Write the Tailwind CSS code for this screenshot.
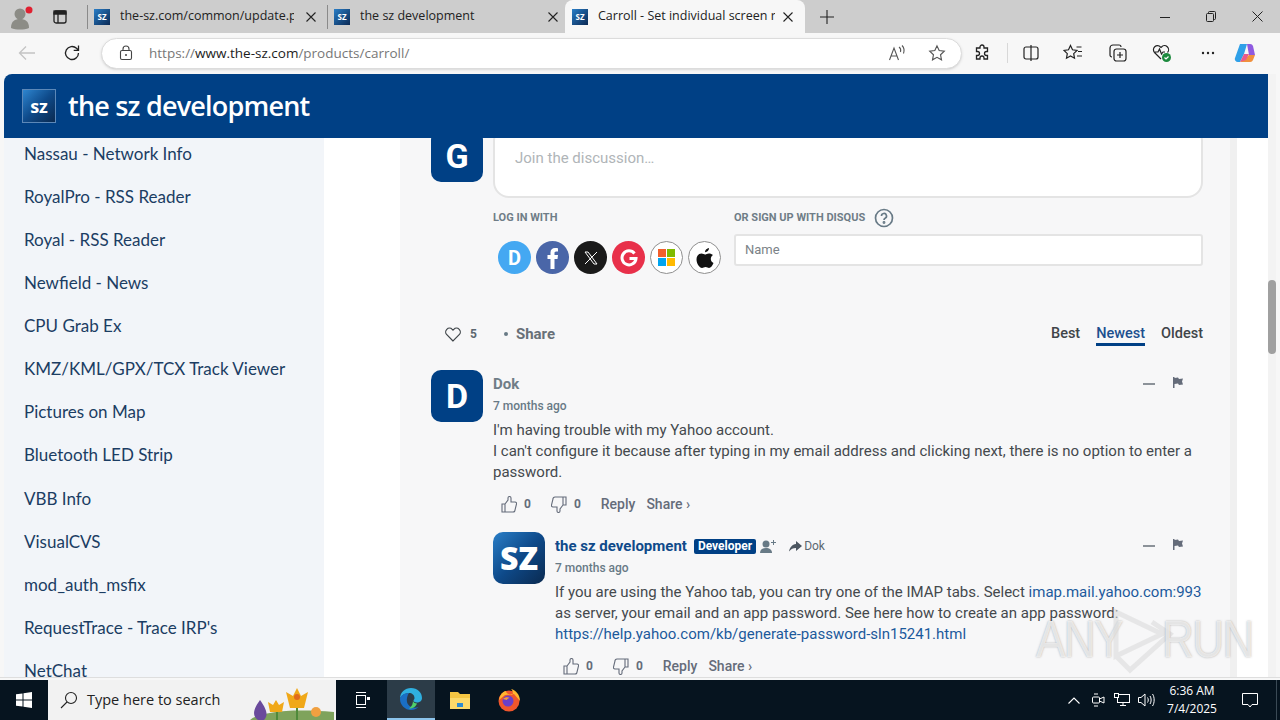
<!DOCTYPE html>
<html lang="en">
<head>
  <meta charset="UTF-8" />
  <title>Carroll - Set individual screen resolution</title>
  <script src="https://cdn.jsdelivr.net/npm/@tailwindcss/browser@4"></script>
</head>
<body class="w-[1280px] h-[720px] overflow-hidden bg-[#f7f7f7] font-['Roboto',sans-serif]">
<div class="flex flex-col h-[720px]">

  <!-- tab bar -->
  <div class="h-[33px] bg-[#cdcdcd] flex items-center text-[12.5px] text-[#222] font-['Open_Sans',sans-serif]">
    <div class="w-[44px] flex justify-center">
      <svg width="24" height="26" viewBox="0 0 24 26"><circle cx="10" cy="10" r="5.5" fill="#8c8c86"/><path d="M1 24c0-7 4-9 9-9s9 2 9 9c-5 2-13 2-18 0z" fill="#8c8c86"/><circle cx="19" cy="6" r="3.5" fill="#e02030"/></svg>
    </div>
    <div class="w-[32px] flex justify-center">
      <svg width="16" height="16" viewBox="0 0 16 16" fill="none" stroke="#222" stroke-width="1.3"><rect x="2" y="2" width="12" height="12" rx="2"/><path d="M2 4.5h12M6 4.5V14" /><rect x="2" y="2" width="12" height="3" fill="#222"/></svg>
    </div>
    <div class="w-[11px]"></div>
    <div class="w-px h-[24px] bg-[#8a8a8a]"></div>
    <div class="w-[239px] h-full flex items-center pl-[6px]">
      <div class="w-[16px] h-[16px] bg-gradient-to-br from-[#2a7fc8] to-[#0b2a55] text-white text-[8px] font-bold flex items-center justify-center">SZ</div>
      <span class="ml-[10px] w-[174px] overflow-hidden whitespace-nowrap">the-sz.com/common/update.php</span>
      <svg class="ml-[12px]" width="10" height="10" viewBox="0 0 10 10" stroke="#222" stroke-width="1.1"><path d="M0.5 0.5l9 9M9.5 0.5l-9 9"/></svg>
    </div>
    <div class="w-px h-[24px] bg-[#8a8a8a]"></div>
    <div class="w-[237px] h-full flex items-center pl-[6px]">
      <div class="w-[16px] h-[16px] bg-gradient-to-br from-[#2a7fc8] to-[#0b2a55] text-white text-[8px] font-bold flex items-center justify-center">SZ</div>
      <span class="ml-[10px] w-[188px] overflow-hidden whitespace-nowrap">the sz development</span>
      <svg class="ml-[0px]" width="10" height="10" viewBox="0 0 10 10" stroke="#222" stroke-width="1.1"><path d="M0.5 0.5l9 9M9.5 0.5l-9 9"/></svg>
    </div>
    <div class="w-[240px] h-[33px] mt-[0px] bg-[#f7f7f7] rounded-t-[8px] flex items-center pl-[7px]">
      <div class="w-[16px] h-[16px] bg-gradient-to-br from-[#2a7fc8] to-[#0b2a55] text-white text-[8px] font-bold flex items-center justify-center">SZ</div>
      <span class="ml-[10px] w-[177px] overflow-hidden whitespace-nowrap">Carroll - Set individual screen resolution</span>
      <svg class="ml-[8px]" width="10" height="10" viewBox="0 0 10 10" stroke="#222" stroke-width="1.1"><path d="M0.5 0.5l9 9M9.5 0.5l-9 9"/></svg>
    </div>
    <div class="ml-[15px]">
      <svg width="14" height="14" viewBox="0 0 14 14" stroke="#222" stroke-width="1.1"><path d="M7 0v14M0 7h14"/></svg>
    </div>
    <div class="flex-1"></div>
    <div class="flex items-center">
      <div class="w-[46px] flex justify-center"><svg width="10" height="10" viewBox="0 0 10 10" stroke="#222"><path d="M0 5.5h10"/></svg></div>
      <div class="w-[46px] flex justify-center"><svg width="10" height="11" viewBox="0 0 10 11" fill="none" stroke="#222"><rect x="0.5" y="2.5" width="7" height="8" rx="1"/><path d="M2.5 2.5v-1a1 1 0 0 1 1-1h5a1 1 0 0 1 1 1v6a1 1 0 0 1-1 1h-1"/></svg></div>
      <div class="w-[46px] flex justify-center"><svg width="11" height="11" viewBox="0 0 11 11" stroke="#222"><path d="M0.5 0.5l10 10M10.5 0.5l-10 10"/></svg></div>
    </div>
  </div>

  <!-- toolbar -->
  <div class="h-[41px] bg-[#f7f7f7] flex items-center pb-[1px] font-['Open_Sans',sans-serif]">
    <div class="w-[54px] flex justify-center">
      <svg width="18" height="16" viewBox="0 0 18 16" fill="none" stroke="#c4c4c4" stroke-width="1.3"><path d="M17 8H1.5M8 1.5L1.5 8 8 14.500"/></svg>
    </div>
    <div class="w-[36px] flex justify-center">
      <svg width="18" height="18" viewBox="0 0 18 18" fill="none" stroke="#222" stroke-width="1.3"><path d="M15.500 9a6.500 6.500 0 1 1-2-4.700L15.500 6.300M15.500 1.500v4.800h-4.800"/></svg>
    </div>
    <div class="w-[11px]"></div>
    <div class="w-[861px] h-[31px] bg-white rounded-full border border-[#dcdcdc] shadow-sm flex items-center">
      <svg class="ml-[17px]" width="14" height="16" viewBox="0 0 14 16" fill="none" stroke="#444" stroke-width="1.1"><rect x="1.500" y="5.500" width="11" height="9" rx="1.500"/><path d="M4 5.500V4a3 3 0 0 1 6 0v1.500"/><circle cx="7" cy="10" r="1" fill="#444" stroke="none"/></svg>
      <span class="ml-[16px] text-[13.500px] text-[#777] whitespace-nowrap">https://<span class="text-[#1c1c1c]">www.the-sz.com</span>/products/carroll/</span>
      <div class="flex-1"></div>
      <svg width="18" height="16" viewBox="0 0 18 16" fill="none" stroke="#555" stroke-width="1.1"><path d="M1.500 15L6 3l4.500 12M3 11h6M11 2c1.500 1 2 3 1.500 5M14 0.500c2 2 2.500 5 1.500 8"/></svg>
      <svg class="ml-[22px] mr-[15px]" width="18" height="18" viewBox="0 0 24 24" fill="none" stroke="#555" stroke-width="1.500"><path d="M12 2.500l2.900 6.300 6.800.8-5 4.700 1.300 6.800-6-3.400-6 3.400 1.300-6.800-5-4.700 6.800-.8z"/></svg>
    </div>
    <div class="w-[29px] flex justify-end">
      <svg width="18" height="18" viewBox="0 0 18 18" fill="none" stroke="#222" stroke-width="1.3"><path d="M7 3a2 2 0 0 1 4 0v1h3.500v3.500h-1a2 2 0 0 0 0 4h1V15H11v-1a2 2 0 0 0-4 0v1H3.500v-3.500h1a2 2 0 0 0 0-4h-1V4H7z"/></svg>
    </div>
    <div class="w-px h-[20px] bg-[#d8d8d8] ml-[16px]"></div>
    <div class="w-[31px] flex justify-end">
      <svg width="16" height="16" viewBox="0 0 16 16" fill="none" stroke="#222" stroke-width="1.200"><rect x="1" y="2" width="14" height="12" rx="2"/><path d="M8 0v16" stroke="#222"/></svg>
    </div>
    <div class="w-[44px] flex justify-end">
      <svg width="20" height="18" viewBox="0 0 20 18" fill="none" stroke="#222" stroke-width="1.200"><path d="M7.500 1.500l2 4.300 4.500.6-3.300 3.200.8 4.600-4-2.300-4 2.300.8-4.600L1 6.400l4.500-.6zM13.500 3h5M15 7.500h4M14 12h5"/></svg>
    </div>
    <div class="w-[44px] flex justify-end">
      <svg width="18" height="18" viewBox="0 0 18 18" fill="none" stroke="#222" stroke-width="1.200"><rect x="5" y="5" width="12" height="12" rx="2.500"/><path d="M3 13a2 2 0 0 1-2-2V4a3 3 0 0 1 3-3h6a2 2 0 0 1 2 2M11 8v6M8 11h6"/></svg>
    </div>
    <div class="w-[45px] flex justify-end">
      <svg width="20" height="20" viewBox="0 0 20 20" fill="none" stroke="#222" stroke-width="1.200"><path d="M9 16L2.500 9.500a4 4 0 0 1 6-5.500l.5.5.5-.5a4 4 0 0 1 6 5.500M3 9h3l1.500-3 2 5 1.500-2h2"/><circle cx="14.500" cy="14.500" r="4.500" fill="#1d8a3e" stroke="none"/><path d="M12.500 14.500l1.500 1.500 2.500-2.500" stroke="#fff"/></svg>
    </div>
    <div class="w-[43px] flex justify-end">
      <svg width="14" height="4" viewBox="0 0 14 4" fill="#222"><circle cx="2" cy="2" r="1.200"/><circle cx="7" cy="2" r="1.200"/><circle cx="12" cy="2" r="1.200"/></svg>
    </div>
    <div class="w-[41px] flex justify-end">
      <svg width="22" height="22" viewBox="0 0 22 22"><path d="M6 2h7l-3 10-4 8H4a3 3 0 0 1-3-4z" fill="#2fa0e8"/><path d="M13 2h3a3 3 0 0 1 3 2l2 9h-6z" fill="#8f5ae0"/><path d="M15 13h6l-2 5a3 3 0 0 1-3 2H6l5-3z" fill="#f0903c"/><path d="M6 20l4-8h5l-3 6z" fill="#e85a8c"/></svg>
    </div>
  </div>

  <!-- page viewport -->
  <div class="h-[603px] flex pl-[4px] pr-[4px]">
    <div class="w-[1264px] flex flex-col overflow-hidden rounded-tl-[8px] bg-white">
      <div class="relative z-10 h-[64px] shrink-0 bg-[#004085] flex items-center pl-[18px]">
        <div class="w-[34px] h-[34px] border border-[#5c88b8] bg-gradient-to-br from-[#2e86d0] via-[#0e4a8a] to-[#0a2a50] flex items-center justify-center text-white text-[18px] font-bold font-['Open_Sans',sans-serif]">sz</div>
        <span class="ml-[12px] text-white text-[27px] font-semibold tracking-[-0.8px] font-['Open_Sans',sans-serif] whitespace-nowrap">the sz development</span>
      </div>
      <div class="flex flex-1 min-h-0">
        <!-- sidebar -->
        <div class="w-[320px] shrink-0 bg-[#f2f5f9] overflow-hidden text-[17px] text-[#1b3d63] font-['Lato',sans-serif] whitespace-nowrap">
          <div class="-mt-[6px]"></div>
          <div class="h-[43.100px] flex items-center pl-[20px]">Nassau - Network Info</div>
          <div class="h-[43.100px] flex items-center pl-[20px]">RoyalPro - RSS Reader</div>
          <div class="h-[43.100px] flex items-center pl-[20px]">Royal - RSS Reader</div>
          <div class="h-[43.100px] flex items-center pl-[20px]">Newfield - News</div>
          <div class="h-[43.100px] flex items-center pl-[20px]">CPU Grab Ex</div>
          <div class="h-[43.100px] flex items-center pl-[20px]">KMZ/KML/GPX/TCX Track Viewer</div>
          <div class="h-[43.100px] flex items-center pl-[20px]">Pictures on Map</div>
          <div class="h-[43.100px] flex items-center pl-[20px]">Bluetooth LED Strip</div>
          <div class="h-[43.100px] flex items-center pl-[20px]">VBB Info</div>
          <div class="h-[43.100px] flex items-center pl-[20px]">VisualCVS</div>
          <div class="h-[43.100px] flex items-center pl-[20px]">mod_auth_msfix</div>
          <div class="h-[43.100px] flex items-center pl-[20px]">RequestTrace - Trace IRP's</div>
          <div class="h-[43.100px] flex items-center pl-[20px]">NetChat</div>
        </div>
        <div class="w-[76px] shrink-0"></div>
        <!-- disqus panel -->
        <div class="w-[837px] shrink-0 bg-[#f7f7f8] border-r-[7px] border-[#f0f0f0] overflow-hidden pl-[31px] pr-[27px] text-[#3f4549]">
          <div class="-mt-[8px] flex gap-[10px] h-[68px]">
            <div class="w-[52px] h-[52px] shrink-0 bg-[#004085] rounded-[10px] flex items-center justify-center text-white text-[34px] font-bold">G</div>
            <div class="w-[710px] h-[73px] -mt-[5px] bg-white rounded-[16px] border-2 border-[#e4e4e4] pl-[20px] pt-[20px] text-[15px] text-[#b0b5b8]">Join the discussion…</div>
          </div>
          <div class="ml-[62px] flex">
            <div class="w-[241px]">
              <div class="mt-[12px] h-[16px] leading-[16px] text-[11px] font-bold text-[#6f7d87]">LOG IN WITH</div>
              <div class="mt-[15px] ml-[5px] flex gap-[5px]">
                <div class="w-[33px] h-[33px] rounded-full bg-[#44a8f2] flex items-center justify-center text-white text-[20px] font-bold">D</div>
                <div class="w-[33px] h-[33px] rounded-full bg-[#4a66a8] flex items-center justify-center">
                  <svg width="12" height="22" viewBox="0 0 12 22" fill="#fff"><path d="M3.500 22V12H0.500V8H3.500V5.500C3.500 2.500 5.300 1 8 1c1.300 0 2.500.1 3 .2v3.300H9.200C7.800 4.500 7.500 5.200 7.500 6.300V8H11l-.5 4h-3v10z"/></svg>
                </div>
                <div class="w-[33px] h-[33px] rounded-full bg-[#1a1a1a] flex items-center justify-center">
                  <svg width="14" height="14" viewBox="0 0 14 14" fill="none" stroke="#fff" stroke-width="1"><path d="M1 1h3l9 12h-3zM13 1L1 13"/></svg>
                </div>
                <div class="w-[33px] h-[33px] rounded-full bg-[#e8304a] flex items-center justify-center">
                  <svg width="18" height="18" viewBox="0 0 18 18" fill="none" stroke="#fff" stroke-width="3"><path d="M14.500 4.500A7 7 0 1 0 16 9.500H9.500"/></svg>
                </div>
                <div class="w-[33px] h-[33px] rounded-full bg-white border border-[#8f8f8f] flex items-center justify-center">
                  <div class="grid grid-cols-2 gap-[1px] w-[17px] h-[17px]">
                    <div class="bg-[#f25f2c]"></div><div class="bg-[#7fba00]"></div><div class="bg-[#00a4ef]"></div><div class="bg-[#ffb900]"></div>
                  </div>
                </div>
                <div class="w-[33px] h-[33px] rounded-full bg-white border border-[#8f8f8f] flex items-center justify-center">
                  <svg width="18" height="20" viewBox="0 0 18 20" fill="#111"><path d="M13 0c.2 2-1.800 4.300-4 4.200C8.800 2.200 11 .2 13 0zM17 7c-1.400 1-2.200 2.200-2.200 3.900 0 2 1.200 3.300 2.700 4-.9 2.400-2.700 5-4.500 5-1.100 0-1.800-.8-3.400-.8s-2.400.8-3.500.8C3.500 20 .5 15.500.5 11.500c0-4 2.600-6 5-6 1.500 0 2.700 1 3.500 1 .8 0 2.200-1.100 3.900-1.100 1.500 0 3.100.7 4.100 1.600z"/></svg>
                </div>
              </div>
            </div>
            <div class="flex-1">
              <div class="mt-[8px] flex items-center h-[24px]">
                <span class="text-[11px] font-bold text-[#6f7d87]">OR SIGN UP WITH DISQUS</span>
                <svg class="ml-[9px]" width="20" height="20" viewBox="0 0 20 20" fill="none" stroke="#687a86" stroke-width="1.700"><circle cx="10" cy="10" r="8.500"/><path d="M7.500 8a2.500 2.500 0 1 1 3.600 2.200c-.8.400-1.100.9-1.100 1.800"/><circle cx="10" cy="14.500" r=".6"/></svg>
              </div>
              <div class="mt-[4px] w-[469px] h-[32px] bg-white border-2 border-[#e4e4e4] rounded-[3px] pl-[9px] flex items-center text-[13px] text-[#7b8287]">Name</div>
            </div>
          </div>

          <!-- sort row -->
          <div class="mt-[50px] flex justify-between items-start h-[22px]">
            <div class="flex items-center h-[20px] ml-[14px]">
              <svg width="16" height="15" viewBox="0 0 16 15" fill="none" stroke="#3f4549" stroke-width="1.200"><path d="M8 14L1.800 7.700a3.800 3.800 0 0 1 5.400-5.400l.8.800.8-.8a3.800 3.800 0 0 1 5.400 5.400z"/></svg>
              <span class="ml-[9px] text-[12px] font-bold text-[#5c6770]">5</span>
              <span class="ml-[27px] w-[4px] h-[4px] rounded-full bg-[#687a86]"></span>
              <span class="ml-[8px] text-[15px] font-bold text-[#687077]">Share</span>
            </div>
            <div class="flex text-[14.500px] font-medium">
              <span class="h-[22px] leading-[20px]">Best</span>
              <span class="ml-[16px] h-[22px] leading-[20px] text-[#1c4f8f] border-b-[3px] border-[#004085]">Newest</span>
              <span class="ml-[16px] h-[22px] leading-[20px]">Oldest</span>
            </div>
          </div>

          <!-- comment -->
          <div class="mt-[24px] flex gap-[10px]">
            <div class="w-[52px] h-[52px] shrink-0 bg-[#004085] rounded-[10px] flex items-center justify-center text-white text-[34px] font-bold">D</div>
            <div class="flex-1">
              <div class="pt-[3px] h-[25px] flex justify-between pr-[20px]">
                <span class="text-[15px] font-bold text-[#6f7d87] leading-[22px]">Dok</span>
                <div class="flex items-center gap-[18px]">
                  <span class="w-[12px] h-[2px] bg-[#8c9299]"></span>
                  <svg class="-mt-[4px]" width="10" height="11" viewBox="0 0 10 11" fill="#656c7a"><path d="M0 0h1.500v11H0zM1.500 1L5 .5 6 2l4-.5-1 3 1 3-4 .5-1-1.500-3.500.5z"/></svg>
                </div>
              </div>
              <div class="h-[22px] leading-[22px] text-[12px] font-medium text-[#687a86]">7 months ago</div>
              <div class="mt-[3px] text-[15px] leading-[21px] text-[#44494d] w-[710px]">I'm having trouble with my Yahoo account.<br>I can't configure it because after typing in my email address and clicking next, there is no option to enter a password.</div>
              <div class="mt-[10px] ml-[8px] h-[22px] flex items-center text-[#656c7a]">
                <svg width="16" height="17" viewBox="0 0 16 17" fill="none" stroke="#656c7a" stroke-width="1.100"><path d="M1 8h3v8H1zM4 8l3-4V2a1.500 1.500 0 0 1 3 0v4h4a1.500 1.500 0 0 1 1.500 2l-1.500 6a2 2 0 0 1-2 2H4"/></svg>
                <span class="ml-[7px] text-[12px] font-bold">0</span>
                <svg class="ml-[20px]" width="16" height="17" viewBox="0 0 16 17" fill="none" stroke="#656c7a" stroke-width="1.100"><path d="M15 9h-3V1h3zM12 9l-3 4v2a1.500 1.500 0 0 1-3 0v-4H2a1.500 1.500 0 0 1-1.500-2L2 3a2 2 0 0 1 2-2h8"/></svg>
                <span class="ml-[7px] text-[12px] font-bold">0</span>
                <span class="ml-[20px] text-[14px] font-medium">Reply</span>
                <span class="ml-[11px] text-[14px] font-medium">Share ›</span>
              </div>

              <!-- reply -->
              <div class="mt-[17px] flex gap-[10px]">
                <div class="w-[52px] h-[52px] shrink-0 rounded-[10px] bg-gradient-to-br from-[#2a7fc8] via-[#0e4a8a] to-[#0a2a50] flex items-center justify-center text-white text-[32px] font-extrabold font-['Open_Sans',sans-serif]">SZ</div>
                <div class="flex-1">
                  <div class="pt-[3px] h-[25px] flex justify-between pr-[20px]">
                    <div class="flex items-center">
                      <span class="text-[15px] font-bold text-[#0f4a8a] leading-[22px]">the sz development</span>
                      <span class="ml-[7px] h-[15px] px-[4px] rounded-[2px] bg-[#004085] text-white text-[12px] font-bold leading-[15px]">Developer</span>
                      <svg class="ml-[4px]" width="17" height="15" viewBox="0 0 17 15" fill="#687a86"><circle cx="6" cy="5" r="3.500"/><path d="M0 14c0-3.500 2.500-5 6-5s6 1.500 6 5z"/><path d="M11 3.500h5M13.500 1v5" stroke="#687a86" fill="none"/></svg>
                      <svg class="ml-[12px]" width="13" height="11" viewBox="0 0 13 11" fill="#4c5660"><path d="M7 0l6 5-6 5V7C4 7 2 8 0 10.500 .8 6.500 3 3.500 7 3z"/></svg>
                      <span class="ml-[2px] text-[12px] text-[#5c6770]">Dok</span>
                    </div>
                    <div class="flex items-center gap-[18px]">
                      <span class="w-[12px] h-[2px] bg-[#8c9299]"></span>
                      <svg class="-mt-[4px]" width="10" height="11" viewBox="0 0 10 11" fill="#656c7a"><path d="M0 0h1.500v11H0zM1.500 1L5 .5 6 2l4-.5-1 3 1 3-4 .5-1-1.500-3.500.5z"/></svg>
                    </div>
                  </div>
                  <div class="h-[22px] leading-[22px] text-[12px] font-medium text-[#687a86]">7 months ago</div>
                  <div class="mt-[3px] text-[15px] leading-[21px] text-[#44494d] w-[648px]">If you are using the Yahoo tab, you can try one of the IMAP tabs. Select <span class="text-[#1c5a9c]">imap.mail.yahoo.com:993</span> as server, your email and an app password. See here how to create an app password: <span class="text-[#1c5a9c]">https://help.yahoo.com/kb/generate-password-sln15241.html</span></div>
                  <div class="mt-[10px] ml-[8px] h-[22px] flex items-center text-[#656c7a]">
                    <svg width="16" height="17" viewBox="0 0 16 17" fill="none" stroke="#656c7a" stroke-width="1.100"><path d="M1 8h3v8H1zM4 8l3-4V2a1.500 1.500 0 0 1 3 0v4h4a1.500 1.500 0 0 1 1.500 2l-1.500 6a2 2 0 0 1-2 2H4"/></svg>
                    <span class="ml-[7px] text-[12px] font-bold">0</span>
                    <svg class="ml-[20px]" width="16" height="17" viewBox="0 0 16 17" fill="none" stroke="#656c7a" stroke-width="1.100"><path d="M15 9h-3V1h3zM12 9l-3 4v2a1.500 1.500 0 0 1-3 0v-4H2a1.500 1.500 0 0 1-1.500-2L2 3a2 2 0 0 1 2-2h8"/></svg>
                    <span class="ml-[7px] text-[12px] font-bold">0</span>
                    <span class="ml-[20px] text-[14px] font-medium">Reply</span>
                    <span class="ml-[11px] text-[14px] font-medium">Share ›</span>
                  </div>
                </div>
              </div>
            </div>
          </div>
        </div>
        <div class="flex-1 bg-white"></div>
      </div>
    </div>
    <!-- scrollbar -->
    <div class="w-[8px] bg-[#f3f3f3] pt-[206px]">
      <div class="w-[8px] h-[74px] rounded-full bg-[#a0a0a0]"></div>
    </div>
  </div>
  <div class="h-[3px] bg-[#f7f7f7] border-t border-[#dedede]"></div>

  <!-- taskbar -->
  <div class="h-[40px] bg-[#06141f] flex items-center text-white">
    <div class="w-[48px] flex justify-center">
      <svg width="16" height="16" viewBox="0 0 16 16" fill="#fff"><path d="M0 2.300L6.500 1.400V7.500H0zM7.500 1.300L16 0V7.500H7.500zM0 8.500H6.500V14.600L0 13.700zM7.500 8.500H16V16L7.500 14.700z"/></svg>
    </div>
    <div class="w-[288px] h-full bg-[#f2f2f2] flex items-center overflow-hidden">
      <svg class="ml-[12px]" width="18" height="18" viewBox="0 0 18 18" fill="none" stroke="#222" stroke-width="1.100"><circle cx="11" cy="7" r="5.500"/><path d="M7 11l-6 6"/></svg>
      <span class="ml-[9px] text-[14.500px] text-[#222] font-['Open_Sans',sans-serif] whitespace-nowrap">Type here to search</span>
      <svg class="ml-[30px]" width="84" height="40" viewBox="0 0 84 40">
        <path d="M0 40c10-8 40-12 84-8v8z" fill="#7fa35c"/>
        <path d="M8 40C0 34 6 26 10 20c4 6 10 14 4 20z" fill="#6a4a9c"/>
        <path d="M20 32l-2-10 5 3 3-5 3 5 5-3-2 10z" fill="#f0a818"/>
        <path d="M40 28l-4-16 7 4 4-8 4 8 7-4-4 16z" fill="#f0a818"/>
        <path d="M47 28v12M27 32v8" stroke="#4f8a3a" stroke-width="2"/>
        <circle cx="47" cy="17" r="3" fill="#e06a1c"/>
        <circle cx="66" cy="32" r="5" fill="#f0a040"/>
      </svg>
    </div>
    <div class="w-[51px] flex justify-center">
      <svg width="16" height="18" viewBox="0 0 16 18" fill="none" stroke="#fff"><rect x="2.500" y="4.500" width="9" height="9"/><path d="M2 1.500h10M2 16.500h10"/><rect x="13" y="6" width="3" height="3" fill="#fff" stroke="none"/></svg>
    </div>
    <div class="w-[48px] h-full bg-[#2c3c48] border-b-[2px] border-[#8cc4ec] flex justify-center items-center">
      <svg width="24" height="24" viewBox="0 0 24 24"><path d="M1 12C1 5 6 1 12 1c6.500 0 11 4.500 11 10 0 3-2.500 4.500-5 4.500-2 0-3.500-1-3.500-2 0-.7 1-1 1-2.500C15.500 8 13 6 10 6 5 6 1 10 1 12z" fill="#2fb0e0"/><path d="M1 12c0 6 5 11 11 11 3 0 5.500-1 7.500-3-5 2-10.500-.5-11.500-5-.7-3 .5-7 2-9C5 6 1 9 1 12z" fill="#1a6fc4"/><path d="M14 13.500c0 2 2 3 4 3-1 3-4 5-8 5 3-2 4-5 4-8z" fill="#4fd06a"/></svg>
    </div>
    <div class="w-[50px] flex justify-center">
      <svg width="22" height="20" viewBox="0 0 22 20"><path d="M1 2h8l2 2h10v15H1z" fill="#f4c542"/><path d="M1 8h20v11H1z" fill="#fbd96a"/><rect x="8" y="13" width="6" height="4" fill="#2e8bd0"/></svg>
    </div>
    <div class="w-[48px] flex justify-center">
      <svg width="24" height="24" viewBox="0 0 24 24"><circle cx="12" cy="13" r="10.500" fill="#f0562c"/><path d="M2 12C3 6 7 3 9 3c0 2 2 3 5 4 3 1 2-5 0-6 5 1 9 6 9 12L17 6 8 7z" fill="#ffb52e"/><circle cx="11" cy="13" r="5.500" fill="#6a3fc8"/><path d="M6 11c2-2 5-2 7-1-2 0-3 1-3 2z" fill="#ff9a2e"/></svg>
    </div>
    <div class="flex-1"></div>
    <div class="w-[24px] flex justify-center">
      <svg width="12" height="7" viewBox="0 0 12 7" fill="none" stroke="#fff" stroke-width="1.100"><path d="M0.500 6.500L6 1l5.500 5.500"/></svg>
    </div>
    <div class="w-[24px] flex justify-center">
      <svg width="14" height="16" viewBox="0 0 14 16" fill="none" stroke="#fff"><rect x="1.500" y="5" width="7" height="6" rx="1"/><path d="M8.500 7L13 5v6L8.500 9M3 2h4M3 14h4"/></svg>
    </div>
    <div class="w-[24px] flex justify-center">
      <svg width="16" height="14" viewBox="0 0 16 14" fill="none" stroke="#fff"><rect x="3.500" y="1.500" width="12" height="8"/><path d="M9 9.500v3M6 12.500h6"/><rect x="0.500" y="0.500" width="4" height="4" fill="#06141f"/></svg>
    </div>
    <div class="w-[24px] flex justify-center">
      <svg width="17" height="14" viewBox="0 0 17 14" fill="none" stroke="#fff"><path d="M0.500 4.500H3L7 1v12L3 9.500H.5zM9.500 4.500c1 1.500 1 3.500 0 5M12 3c1.500 2 1.500 6 0 8M14.500 1c2.200 3 2.200 9 0 12"/></svg>
    </div>
    <div class="w-[58px] text-center text-[12px] leading-[18px] font-['Open_Sans',sans-serif] ml-[5px]">
      <div>6:36 AM</div>
      <div>7/4/2025</div>
    </div>
    <div class="w-[52px] flex justify-center ml-[3px]">
      <svg width="16" height="16" viewBox="0 0 16 16" fill="none" stroke="#fff"><path d="M0.500 1.500h15v11H10L8 15l-2-2.500H.5z"/></svg>
    </div>
    <div class="w-[4px] h-full border-l border-[#3a4a55]"></div>
  </div>
</div>

<!-- watermark -->
<div class="absolute left-[1036px] top-[604px] w-[200px] h-[70px] flex items-center pointer-events-none">
  <span class="text-[52px] leading-none font-['Liberation_Sans',sans-serif] text-white/70 [text-shadow:0_0_2px_rgba(90,90,90,0.5)] tracking-[-2px] scale-x-[0.85] origin-left">ANY</span>
  <svg class="absolute left-[72px] top-[2px]" width="66" height="70" viewBox="0 0 66 70" fill="none" stroke="#d8d8d8" stroke-opacity="0.55" stroke-width="5"><path d="M8 6v44l46-22zM8 50l14 14 40-36L44 16"/></svg>
  <span class="absolute left-[126px] text-[52px] leading-none font-['Liberation_Sans',sans-serif] text-white/70 [text-shadow:0_0_2px_rgba(90,90,90,0.5)] tracking-[-2px] scale-x-[0.85] origin-left">RUN</span>
</div>
</body>
</html>
